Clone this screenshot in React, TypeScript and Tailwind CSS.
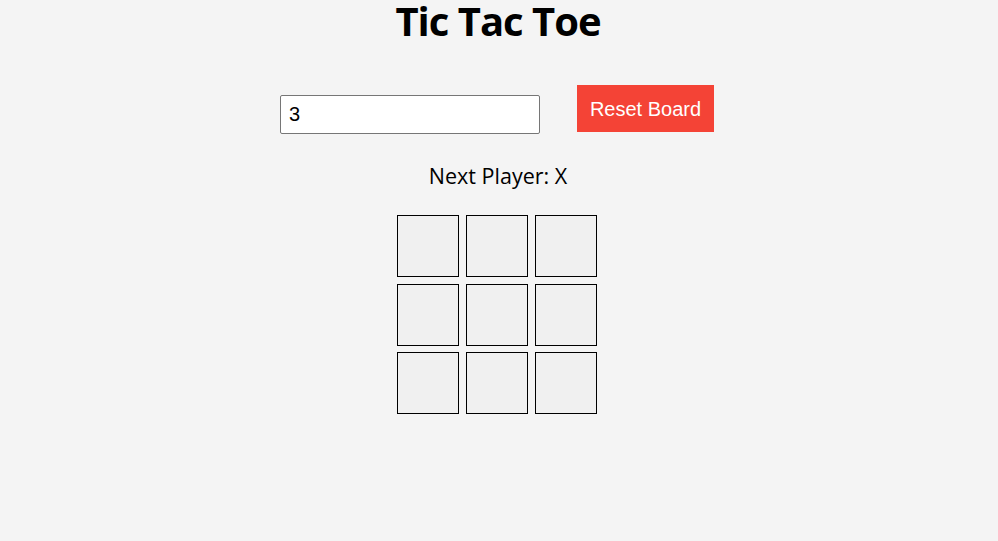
import React, { useState } from "react";

const App = () => {
  const [size, setSize] = useState("3");
  const n = 3;
  const cells = Array.from({ length: n * n });

  return (
    <div className="min-h-[541px] bg-[#f4f4f4] flex flex-col items-center font-['Open_Sans',sans-serif] text-black">
      <h1 className="text-[40px] leading-[40px] tracking-[-1px] font-bold pt-[1px] pr-[2px]">Tic Tac Toe</h1>
      <div className="flex items-start mt-[44px] pr-[4px] font-['Liberation_Sans',Arial,sans-serif]">
        <input
          value={size}
          onChange={(e) => setSize(e.target.value)}
          className="w-[260px] h-[39px] mt-[10px] border border-[#767676] rounded-[2px] bg-white px-[8px] text-[20px] outline-none"
        />
        <button className="ml-[37px] w-[137px] h-[47px] bg-[#f44336] text-white text-[20px]">
          Reset Board
        </button>
      </div>
      <p className="mt-[27px] text-[21.5px] leading-[30px] pr-[2px]">Next Player: X</p>
      <div className="grid grid-cols-[62px_62px_62px] gap-x-[7px] gap-y-[6.5px] mt-[24px] pr-[4px]">
        {cells.map((_, i) => (
          <button key={i} className="w-[62px] h-[62px] bg-[#f0f0f0] border border-black" />
        ))}
      </div>
    </div>
  );
};

export default App;
